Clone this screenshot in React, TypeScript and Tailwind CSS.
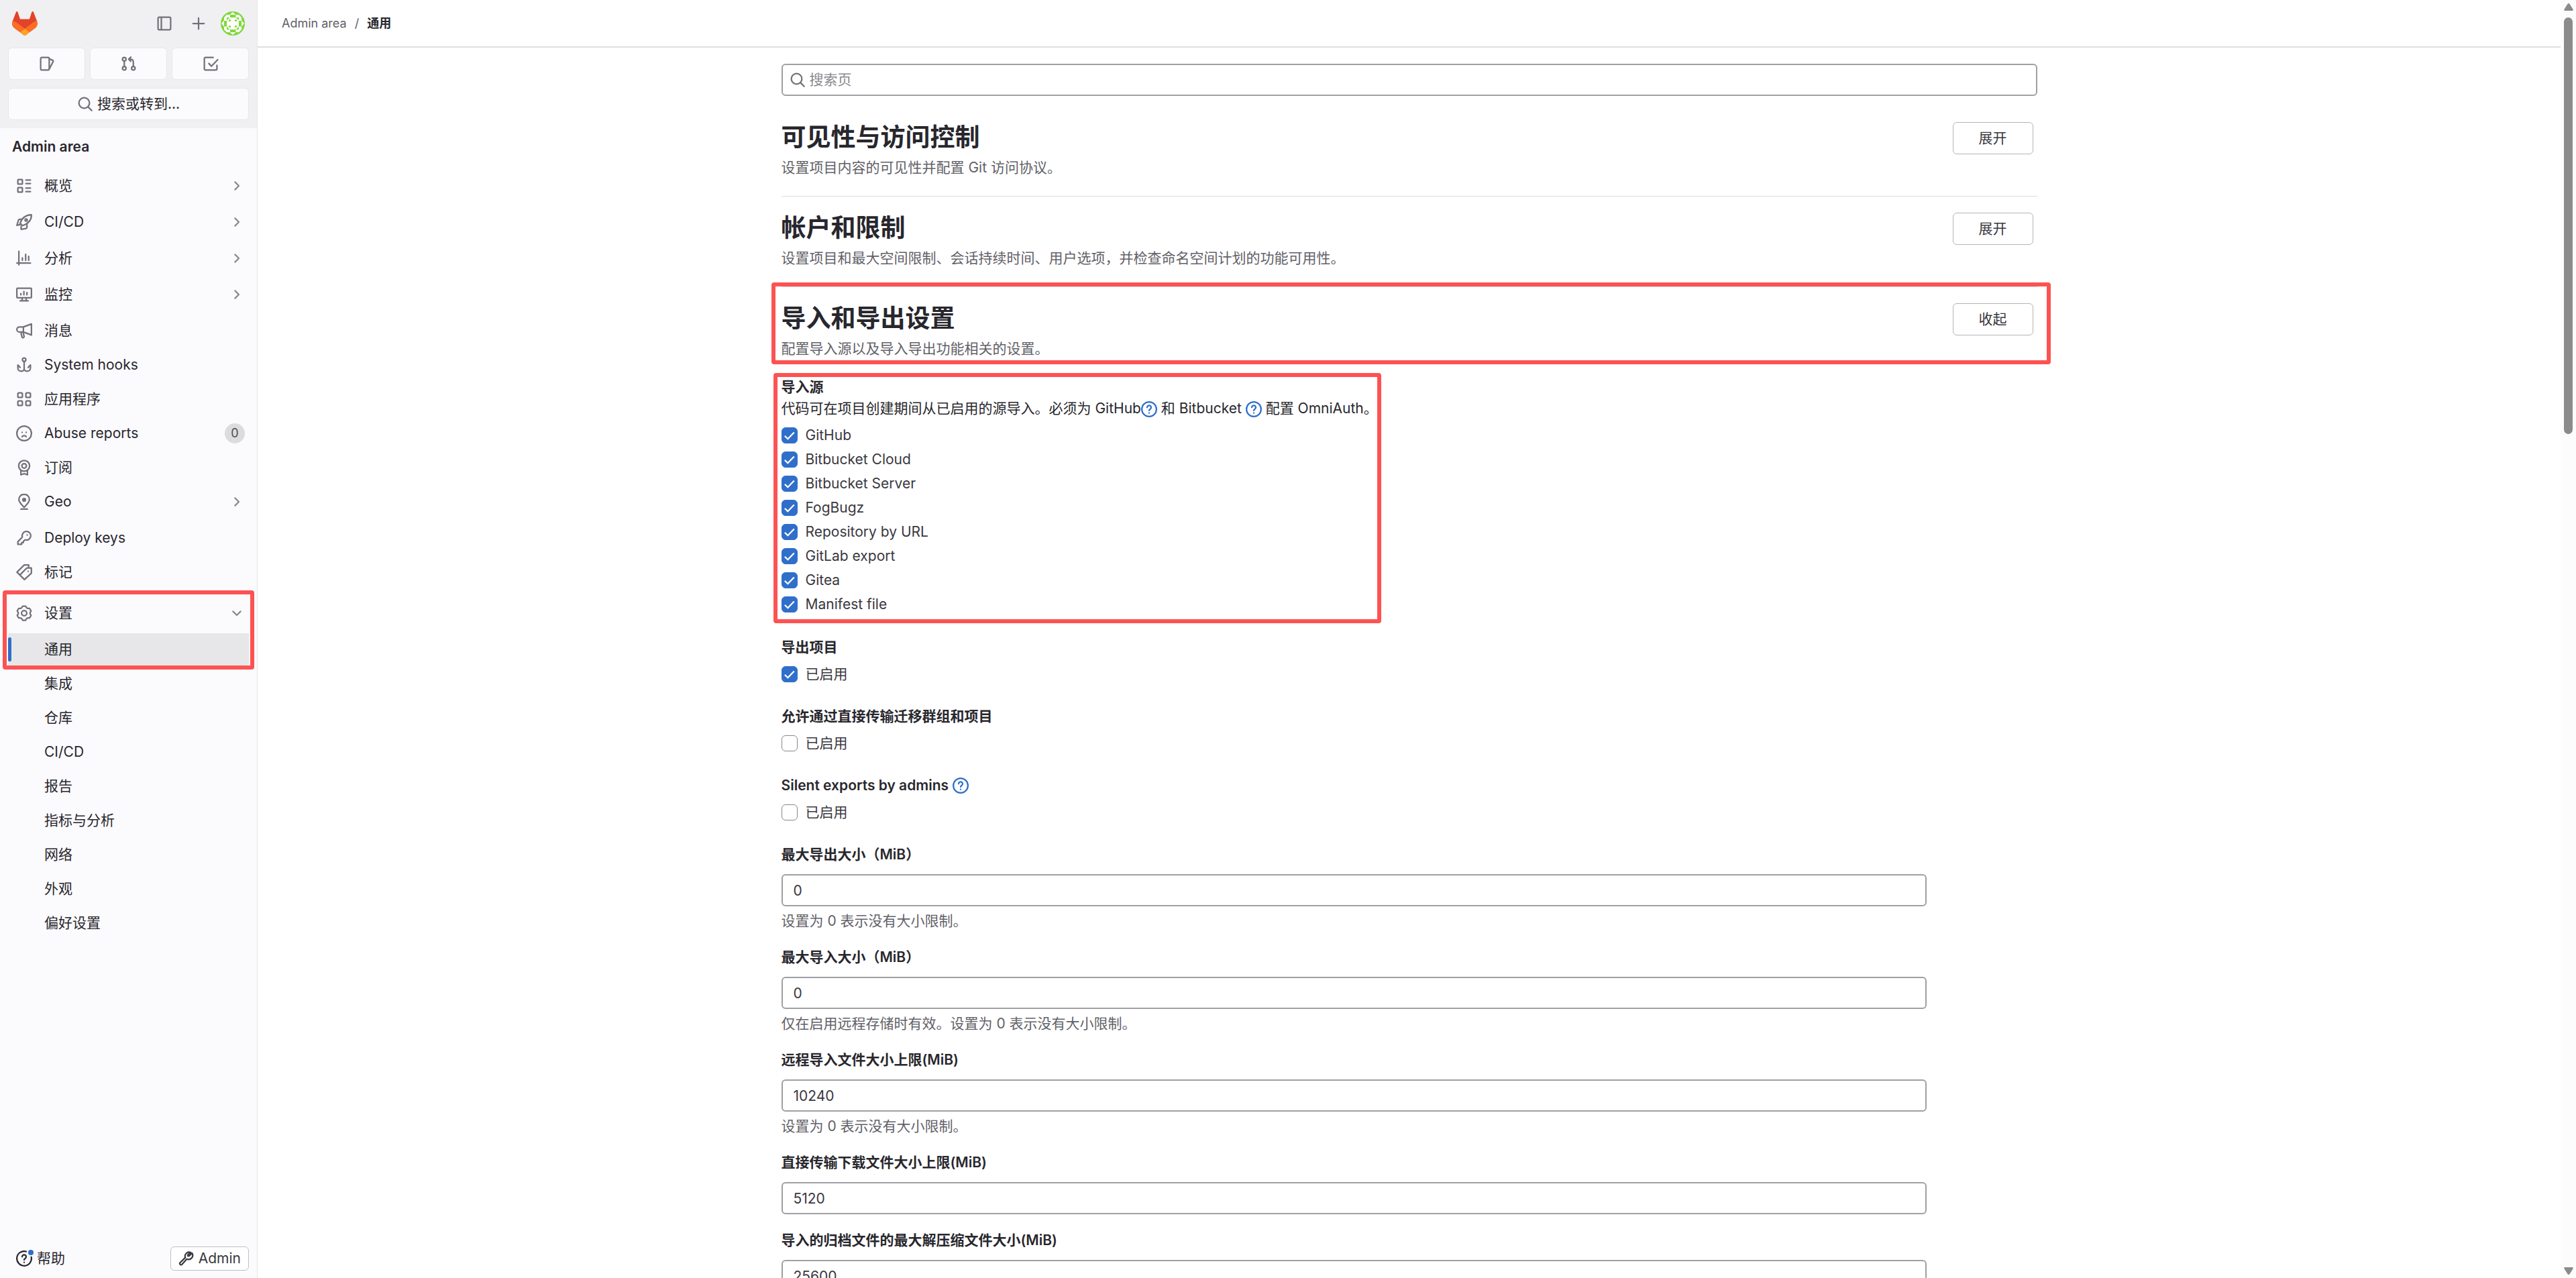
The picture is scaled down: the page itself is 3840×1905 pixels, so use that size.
import type { ReactNode } from "react";

const icons: Record<string, ReactNode> = {
  sidebar: <><rect x="1.75" y="1.75" width="12.5" height="12.5" rx="1.25" /><path d="M5 2v12" /></>,
  plus: <path d="M8 2.5v11M2.5 8h11" />,
  issues: <><rect x="1.75" y="1.75" width="8.5" height="12.5" rx="1.25" /><path d="M10.5 3.2l3.2 1.4a.9.9 0 0 1 .5 1.2l-3.7 7" /></>,
  merge: <><circle cx="3.5" cy="3.5" r="1.75" /><circle cx="3.5" cy="12.5" r="1.75" /><circle cx="12.5" cy="12.5" r="1.75" /><path d="M3.5 5.25v5.5M12.5 10.75V6A2.5 2.5 0 0 0 10 3.5H8.2M10 1.4L7.9 3.5 10 5.6" /></>,
  todo: <><path d="M10.5 1.75H3c-.7 0-1.25.55-1.25 1.25v10c0 .7.55 1.25 1.25 1.25h10c.7 0 1.25-.55 1.25-1.25V9.5" /><path d="M6.25 7.75L8.75 10.5 15 4" /></>,
  search: <><circle cx="7" cy="7" r="5.25" /><path d="M10.9 10.9l3.6 3.6" /></>,
  overview: <><rect x="1.75" y="1.75" width="4.5" height="4.5" rx=".5" /><rect x="1.75" y="9.75" width="4.5" height="4.5" rx=".5" /><path d="M9.75 2.25h4.5M9.75 5.75h4.5M9.75 10.25h4.5M9.75 13.75h4.5" /></>,
  rocket: <><path d="M15.2.8c.2 5-3 8.600-8.700 10.700L4 9.300C5.600 4 9.500 1 15.200.8z" /><circle cx="10" cy="6" r="1.100" /><path d="M6 5.200H3.600c-.6 0-1 .3-1.200.8L.8 11.300l3.500-.9M5 12v3.200l4.800-.8c.6-.1 1-.6 1-1.200V9.900" /></>,
  chart: <path d="M2.75 1v13.5M.75 12.75h13.5M6.25 7.5V10M9.5 4v6M12.5 6v4" />,
  monitor: <><rect x=".75" y="1.75" width="14.5" height="9.5" rx=".75" /><path d="M4.75 7v1.25M7.75 5v3.25M10.75 6v2.25M6 11.500v2M10 11.500v2M4 14.250h8" /></>,
  bullhorn: <><path d="M7.25 4.25h-4a2.500 2.500 0 0 0 0 5h4zM7.25 4.250l8-3v11l-8-3" /><path d="M4.75 9.500l1 4.500a1.100 1.100 0 0 0 2.200-.4L7 9.500" /></>,
  hook: <><circle cx="8" cy="2.75" r="1.7" /><path d="M8 4.500v7.250a2.500 2.500 0 0 1-2.500 2.500H5A3.250 3.250 0 0 1 1.750 11V8l2.300 2.500M8 11.750a2.500 2.500 0 0 0 2.500 2.500h.5A3.250 3.250 0 0 0 14.250 11V8l-2.300 2.500" /></>,
  apps: <><rect x="1.75" y="1.75" width="4.5" height="4.5" rx="1" /><rect x="9.75" y="1.75" width="4.5" height="4.5" rx="1" /><rect x="1.75" y="9.75" width="4.5" height="4.5" rx="1" /><rect x="9.75" y="9.75" width="4.5" height="4.5" rx="1" /></>,
  frown: <><circle cx="8" cy="8" r="7.25" /><path d="M6 11.200c1-1.300 3-1.300 4 0M6 6.900v.1M10 6.900v.1" /></>,
  license: <><circle cx="8" cy="6.25" r="5.4" /><circle cx="8" cy="6.25" r="2.25" /><path d="M4.75 11v4.200L8 14l3.250 1.200V11" /></>,
  location: <><path d="M8 13.500c-3-3.200-5.250-5.500-5.250-7.750a5.250 5.250 0 0 1 10.500 0c0 2.250-2.250 4.550-5.250 7.750zM4.750 15.250h6.500" /><circle cx="8" cy="6" r="1.3" fill="currentColor" /></>,
  key: <><path d="M6.200 7A4.300 4.300 0 1 1 9 9.800L7.200 11.200v1.300H5.500v1.750H1.750v-2.500z" /><path d="M11 4.900v.1" /></>,
  labels: <><path d="M.9 7.900L8.100.75h4.400v2M3.900 10.600l6.300-6.400c.3-.3.600-.45 1-.45h4v5.200L8.300 15.250.9 7.900" /><path d="M11.900 7v.1" /></>,
  settings: <><path d="M6.500 1h3l1 1.650.88.52 1.970.01 1.500 2.600-.97 1.710v1.020l.97 1.710-1.500 2.600-1.970.01-.88.520L9.500 15h-3l-1-1.650-.88-.52-1.970-.01-1.500-2.600.97-1.710V7.490l-.97-1.710 1.500-2.600 1.970-.01.88-.52z" /><circle cx="8" cy="8" r="2.6" /></>,
  help: <><circle cx="8" cy="8" r="7.25" /><path d="M6 6.200a2 2 0 1 1 3 1.750c-.65.35-1 .7-1 1.300M8 11.700v.1" /></>,
  helpNew: <><path d="M10 1A7.250 7.250 0 1 0 15.100 6.500" /><path d="M6 6.200a2 2 0 1 1 3 1.750c-.65.35-1 .7-1 1.300M8 11.700v.1" /></>,
  wrench: <path d="M10.800 5.300l2.700-2.700a4.100 4.100 0 0 1-5.200 5.900l-4.800 5.300a1.300 1.300 0 0 1-2-.2 1.300 1.300 0 0 1 .2-1.600l5.100-4.900a4.100 4.100 0 0 1 5.200-5.200L9.300 4.400l.2 1.200z" />,
  right: <path d="M6.25 4.25L10 8l-3.750 3.750" />,
  down: <path d="M4.25 6.250L8 10l3.750-3.750" />,
};

function Icon({ name, className = "" }: { name: string; className?: string }) {
  return (
    <svg viewBox="0 0 16 16" className={"size-6 shrink-0 " + className} fill="none" stroke="currentColor" strokeWidth="1.5" strokeLinecap="round" strokeLinejoin="round" aria-hidden="true">
      {icons[name]}
    </svg>
  );
}

function Logo() {
  return (
    <svg viewBox="0 0 25 24" className="h-9 w-[38px]" aria-hidden="true">
      <path fill="#E24329" d="m24.507 9.500-.034-.09L21.082.562a.896.896 0 0 0-1.694.091l-2.290 7.010H7.825L5.535.653a.898.898 0 0 0-1.694-.09L.451 9.411.416 9.500a6.297 6.297 0 0 0 2.090 7.278l.012.01.03.022 5.160 3.867 2.560 1.935 1.554 1.176a1.051 1.051 0 0 0 1.268 0l1.555-1.176 2.560-1.935 5.197-3.890.014-.01A6.297 6.297 0 0 0 24.507 9.500Z" />
      <path fill="#FC6D26" d="m24.507 9.500-.034-.09a11.440 11.440 0 0 0-4.560 2.051l-7.447 5.632 4.742 3.584 5.197-3.890.014-.01A6.297 6.297 0 0 0 24.507 9.500Z" />
      <path fill="#FCA326" d="m7.707 20.677 2.560 1.935 1.555 1.176a1.051 1.051 0 0 0 1.268 0l1.555-1.176 2.560-1.935-4.743-3.584-4.755 3.584Z" />
      <path fill="#FC6D26" d="M5.010 11.461a11.430 11.430 0 0 0-4.560-2.050L.416 9.500a6.297 6.297 0 0 0 2.090 7.278l.012.01.03.022 5.160 3.867 4.745-3.584-7.444-5.632Z" />
    </svg>
  );
}

function Avatar() {
  return (
    <svg viewBox="0 0 36 36" className="size-9 rounded-full" aria-hidden="true">
      <rect width="36" height="36" fill="#7fd93a" />
      <path fill="#fff" d="M9 9h18v18H9zM18 1l4.500 4H27v4H9V5h4.500zM18 35l4.500-4H27v-4H9v4h4.500zM1 18l4-4.500V9h4v18H5v-4.500zM35 18l-4-4.500V9h-4v18h4v-4.500zM5 9l4-4v4zM31 9l-4-4v4zM5 27l4 4v-4zM31 27l-4 4v-4z" />
      <path fill="#7fd93a" d="M14 5h8.500v4H14zM14 27h8.500v4H14zM5 14h4v8.500H5zM27 14h4v8.500h-4zM9 13.500V9h4.500zM27 13.500V9h-4.500zM9 22.500V27h4.500zM27 22.500V27h-4.500zM13.500 11.500l2 2-2 2-2-2zM22.500 11.500l2 2-2 2-2-2zM13.500 20.500l2 2-2 2-2-2zM22.500 20.500l2 2-2 2-2-2z" />
    </svg>
  );
}

type Item = { icon: string; label: string; children?: boolean; count?: number };

const menu: Item[] = [
  { icon: "overview", label: "概览", children: true },
  { icon: "rocket", label: "CI/CD", children: true },
  { icon: "chart", label: "分析", children: true },
  { icon: "monitor", label: "监控", children: true },
  { icon: "bullhorn", label: "消息" },
  { icon: "hook", label: "System hooks" },
  { icon: "apps", label: "应用程序" },
  { icon: "frown", label: "Abuse reports", count: 0 },
  { icon: "license", label: "订阅" },
  { icon: "location", label: "Geo", children: true },
  { icon: "key", label: "Deploy keys" },
  { icon: "labels", label: "标记" },
];

const subMenu = ["集成", "仓库", "CI/CD", "报告", "指标与分析", "网络", "外观", "偏好设置"];

const sources = ["GitHub", "Bitbucket Cloud", "Bitbucket Server", "FogBugz", "Repository by URL", "GitLab export", "Gitea", "Manifest file"];

const sizes = [
  { id: "max-export", label: "最大导出大小（MiB）", value: "0", help: "设置为 0 表示没有大小限制。" },
  { id: "max-import", label: "最大导入大小（MiB）", value: "0", help: "仅在启用远程存储时有效。设置为 0 表示没有大小限制。" },
  { id: "max-remote", label: "远程导入文件大小上限(MiB)", value: "10240", help: "设置为 0 表示没有大小限制。" },
  { id: "max-download", label: "直接传输下载文件大小上限(MiB)", value: "5120" },
  { id: "max-archive", label: "导入的归档文件的最大解压缩文件大小(MiB)", value: "25600" },
];

function MenuItem({ item }: { item: Item }) {
  return (
    <li className={item.children ? "pb-1.5" : "pb-[3px]"}>
      <a href="#" className="flex h-12 items-center pl-3 pr-1.5">
        <Icon name={item.icon} className="text-[#737278]" />
        <span className="ml-[18px] grow">{item.label}</span>
        {item.children && <Icon name="right" className="text-[#89888d]" />}
        {item.count !== undefined && (
          <span className="flex size-[30px] items-center justify-center rounded-full bg-[#dcdcde] text-lg text-[#4c4b51]">{item.count}</span>
        )}
      </a>
    </li>
  );
}

function Sidebar() {
  return (
    <aside className="flex w-96 shrink-0 flex-col border-r border-[#e7e7ea] bg-[#fbfafd] text-[21px] leading-8 text-[#28272d]">
      <div className="bg-[#f0f0f2] px-3 pb-3 pt-[17px] text-[#737278]">
        <div className="flex items-center px-1.5">
          <a href="#" aria-label="首页"><Logo /></a>
          <div className="ml-auto flex items-center">
            <button aria-label="侧边栏" className="mr-[27px]"><Icon name="sidebar" className="block" /></button>
            <button aria-label="新建" className="mr-[21px]"><Icon name="plus" className="block" /></button>
            <button aria-label="用户"><Avatar /></button>
          </div>
        </div>
        <div className="mt-[18px] grid grid-cols-3 gap-[7px]">
          <a href="#" aria-label="议题" className="flex h-12 items-center justify-center rounded-md border border-[#e7e7ea] bg-[#fbfafd]"><Icon name="issues" /></a>
          <a href="#" aria-label="合并请求" className="flex h-12 items-center justify-center rounded-md border border-[#e7e7ea] bg-[#fbfafd]"><Icon name="merge" /></a>
          <a href="#" aria-label="待办" className="flex h-12 items-center justify-center rounded-md border border-[#e7e7ea] bg-[#fbfafd]"><Icon name="todo" /></a>
        </div>
        <button className="mt-3 flex h-12 w-full items-center justify-center gap-1.5 rounded-md border border-[#e7e7ea] bg-[#fbfafd]">
          <Icon name="search" />
          <span className="text-[#28272d]">搜索或转到...</span>
        </button>
      </div>

      <nav className="grow px-3 pt-3">
        <h2 className="mb-[18px] px-1.5 font-semibold">Admin area</h2>
        <ul>
          {menu.map((item) => <MenuItem key={item.label} item={item} />)}
        </ul>
        <div className="relative mt-[10px]">
          <button className="flex h-12 w-full items-center pl-3 pr-1.5">
            <Icon name="settings" className="text-[#737278]" />
            <span className="ml-[18px] grow text-left">设置</span>
            <Icon name="down" className="text-[#89888d]" />
          </button>
          <a href="#" className="mt-1.5 flex h-12 items-center bg-[#e7e7e9]">
            <span className="h-9 w-[5px] rounded-full bg-[#2f6fca]" />
            <span className="ml-[49px]">通用</span>
          </a>
          <div className="pointer-events-none absolute -inset-x-2 -bottom-1.5 -top-[10px] rounded border-6 border-[#fd5252]" />
        </div>
        <ul className="pt-[3px]">
          {subMenu.map((label) => (
            <li key={label} className="pb-[3px]"><a href="#" className="flex h-12 items-center pl-[54px]">{label}</a></li>
          ))}
        </ul>
      </nav>

      <div className="flex items-center justify-between px-3 pb-[11px]">
        <button className="relative flex items-center gap-[7px] pl-3">
          <Icon name="helpNew" />
          <span>帮助</span>
          <span className="absolute left-[30px] top-[3px] size-2 rounded-full bg-[#2f6fca]" />
        </button>
        <a href="#" className="flex h-9 items-center gap-1.5 rounded-md border border-[#bfbfc3] bg-white px-[11px] text-[#3a383f]">
          <Icon name="wrench" />
          Admin
        </a>
      </div>
    </aside>
  );
}

function Section({ title, text, open }: { title: string; text: string; open?: boolean }) {
  return (
    <div className="flex items-start justify-between pt-6">
      <div>
        <h2 className="text-[37px] font-semibold leading-[46px]">{title}</h2>
        <p className="mt-1.5 leading-8 text-[#626168]">{text}</p>
      </div>
      <button className="mr-1.5 h-12 w-[120px] rounded-md border border-[#b5b5b9] text-[#3a383f]">{open ? "收起" : "展开"}</button>
    </div>
  );
}

function Checkbox({ label, checked }: { label: string; checked?: boolean }) {
  return (
    <label className="flex w-fit items-center gap-3 leading-8 text-[#3a383f]">
      <span className="grid">
        <input type="checkbox" defaultChecked={checked} className="peer col-start-1 row-start-1 size-6 appearance-none rounded-md border border-[#89888d] bg-white checked:border-[#2f6fca] checked:bg-[#2f6fca]" />
        <svg viewBox="0 0 16 16" className="pointer-events-none invisible col-start-1 row-start-1 size-6 peer-checked:visible" fill="none" stroke="#fff" strokeWidth="1.5" aria-hidden="true">
          <path d="M3.25 8.500L6.250 11.500 12.500 5" />
        </svg>
      </span>
      {label}
    </label>
  );
}

function HelpLink() {
  return <a href="#" aria-label="帮助" className="inline-block align-middle text-[#2f6fca]"><Icon name="help" className="block" /></a>;
}

function Toggle({ title, checked, help }: { title: string; checked?: boolean; help?: boolean }) {
  return (
    <fieldset className="mb-[31px]">
      <legend className="mb-2 flex h-8 items-center gap-1.5 font-semibold leading-8">
        {title}
        {help && <HelpLink />}
      </legend>
      <Checkbox label="已启用" checked={checked} />
    </fieldset>
  );
}

function Scrollbar() {
  return (
    <div className="flex w-[23px] shrink-0 flex-col items-center bg-[#fcfcfc] py-[5px]" aria-hidden="true">
      <svg viewBox="0 0 14 11" className="h-[11px] w-[14px] fill-[#8b8b8b]"><path d="M7 0q1 0 1.600.9L13.600 9q.6 2-1 2H1.400q-1.600 0-1-2L5.400.9Q6 0 7 0z" /></svg>
      <div className="mt-[10px] grow">
        <div className="h-1/3 w-[13px] rounded-full bg-[#8b8b8b]" />
      </div>
      <svg viewBox="0 0 14 11" className="h-[11px] w-[14px] fill-[#8b8b8b]"><path d="M7 11q1 0 1.600-.9L13.600 2q.6-2-1-2H1.400Q-.2 0 .4 2l5 8.100Q6 11 7 11z" /></svg>
    </div>
  );
}

export default function App() {
  return (
    <div lang="zh-CN" className="flex h-screen overflow-hidden bg-white font-[Inter,'Noto_Sans_CJK_SC',sans-serif] text-[21px] text-[#28272d]">
      <Sidebar />

      <div className="flex min-w-0 grow flex-col overflow-hidden">
        <header className="flex h-[71px] shrink-0 items-center border-b-2 border-[#dfdfe1] px-9 text-lg">
          <nav className="flex gap-3">
            <a href="#" className="text-[#626168]">Admin area</a>
            <span className="text-[#626168]">/</span>
            <a href="#" className="font-semibold">通用</a>
          </nav>
        </header>

        <main className="mx-auto w-full max-w-[1872px] pt-6">
          <div className="flex h-12 items-center gap-1.5 rounded-md border-2 border-[#a09fa4] px-[10px]">
            <Icon name="search" className="text-[#737278]" />
            <input type="text" placeholder="搜索页" aria-label="搜索页" className="grow outline-none placeholder:text-[#89888d]" />
          </div>

          <section className="mt-[15px] border-b border-[#dcdcde] pb-[26px]">
            <Section title="可见性与访问控制" text="设置项目内容的可见性并配置 Git 访问协议。" />
          </section>
          <section className="border-b border-[#dcdcde] pb-[26px]">
            <Section title="帐户和限制" text="设置项目和最大空间限制、会话持续时间、用户选项，并检查命名空间计划的功能可用性。" />
          </section>

          <section>
            <div className="relative">
              <Section title="导入和导出设置" text="配置导入源以及导入导出功能相关的设置。" open />
              <div className="pointer-events-none absolute -bottom-[7px] -left-[15px] -right-5 -top-[7px] rounded border-6 border-[#fd5252]" />
            </div>

            <form className="mt-[25px] pr-[165px]">
              <div className="relative mb-[30px] w-fit">
                <fieldset>
                  <legend className="font-semibold leading-8">导入源</legend>
                  <p className="mb-1.5 h-8 leading-8">
                    代码可在项目创建期间从已启用的源导入。必须为 GitHub<HelpLink /> 和 Bitbucket <HelpLink /> 配置 OmniAuth。
                  </p>
                  <div className="flex flex-col gap-1 py-0.5">
                    {sources.map((name) => <Checkbox key={name} label={name} checked />)}
                  </div>
                </fieldset>
                <div className="pointer-events-none absolute -bottom-[10px] -left-3 -right-[5px] -top-[5px] rounded border-6 border-[#fd5252]" />
              </div>

              <Toggle title="导出项目" checked />
              <Toggle title="允许通过直接传输迁移群组和项目" />
              <Toggle title="Silent exports by admins" help />

              {sizes.map((field) => (
                <div key={field.id} className="mb-[23px]">
                  <label htmlFor={field.id} className="mb-[13px] block font-semibold leading-8">{field.label}</label>
                  <input id={field.id} type="text" defaultValue={field.value} className="block h-12 w-full rounded-md border-2 border-[#a09fa4] px-4 text-[#3a383f]" />
                  {field.help && <p className="mt-1.5 leading-[31px] text-[#626168]">{field.help}</p>}
                </div>
              ))}
            </form>
          </section>
        </main>
      </div>

      <Scrollbar />
    </div>
  );
}
